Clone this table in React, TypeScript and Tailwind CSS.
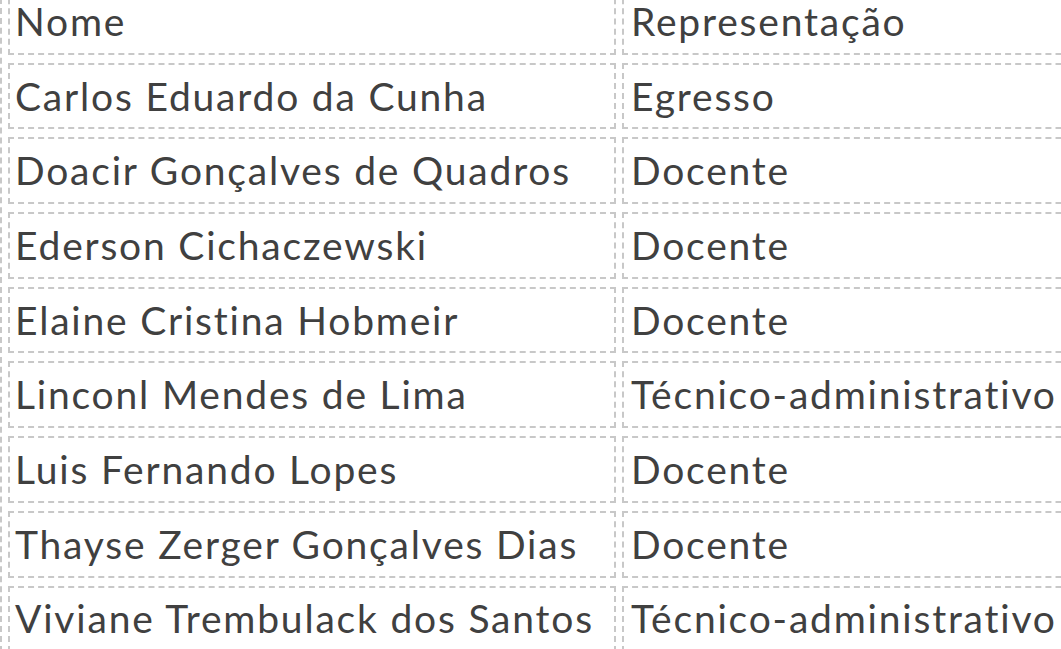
import React from "react";

const rows: [string, string][] = [
  ["Nome", "Representação"],
  ["Carlos Eduardo da Cunha", "Egresso"],
  ["Doacir Gonçalves de Quadros", "Docente"],
  ["Ederson Cichaczewski", "Docente"],
  ["Elaine Cristina Hobmeir", "Docente"],
  ["Linconl Mendes de Lima", "Técnico-administrativo"],
  ["Luis Fernando Lopes", "Docente"],
  ["Thayse Zerger Gonçalves Dias", "Docente"],
  ["Viviane Trembulack dos Santos", "Técnico-administrativo"],
];

export default function App() {
  return (
    <div className="w-[1061px] h-[649px] overflow-hidden bg-white">
      <table
        className="table-fixed w-[1130px] min-w-[1130px] mt-[-22px] border-separate border-spacing-x-[6px] border-spacing-y-[8px] border-2 border-dashed border-[#c8c8c8] text-[#404040] text-[39px] tracking-[1.8px] leading-none whitespace-nowrap"
        style={{ fontFamily: "Lato, 'Open Sans', sans-serif" }}
      >
        <colgroup>
          <col className="w-[608px]" />
          <col className="w-[500px]" />
        </colgroup>
        <tbody>
          {rows.map(([a, b], i) => (
            <tr key={i}>
              <td className="h-[66.7px] w-[608px] border-2 border-dashed border-[#c8c8c8] pl-[5px] pr-0 align-middle text-left overflow-hidden">
                {a}
              </td>
              <td className="h-[66.7px] w-[500px] border-2 border-dashed border-[#c8c8c8] pl-[7px] align-middle text-left overflow-hidden">
                {b}
              </td>
            </tr>
          ))}
        </tbody>
      </table>
    </div>
  );
}
